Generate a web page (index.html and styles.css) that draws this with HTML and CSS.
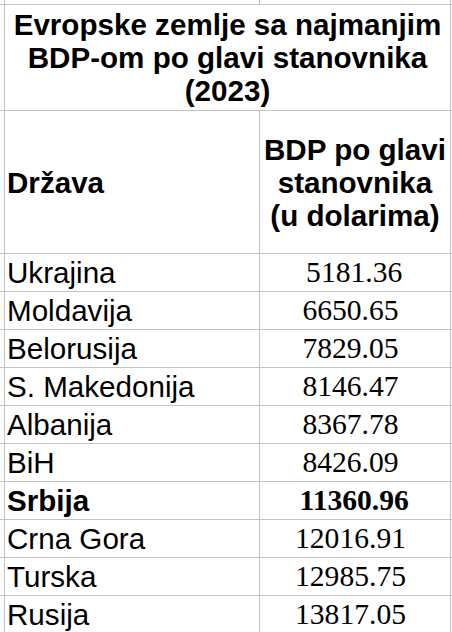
FILE: index.html
```html
<!DOCTYPE html>
<html lang="sr">
<head>
    <meta charset="UTF-8">
    <meta name="viewport" content="width=device-width, initial-scale=1.0">
    <title>Evropske zemlje sa najmanjim BDP-om</title>
    <link rel="stylesheet" href="styles.css">
</head>
<body>

    <div class="sheet">
        <!-- red iznad tabele -->
        <div class="cell"></div>
        <div class="cell"></div>
        <div class="cell"></div>
        <div class="cell"></div>

        <div class="cell"></div>
        <div class="cell title">Evropske zemlje sa najmanjim<br>BDP-om po glavi stanovnika<br>(2023)</div>
        <div class="cell"></div>

        <div class="cell"></div>
        <div class="cell head">Država</div>
        <div class="cell head center">BDP po glavi<br>stanovnika<br>(u dolarima)</div>
        <div class="cell"></div>

        <div class="cell"></div><div class="cell name">Ukrajina</div><div class="cell num"> 5181.36</div><div class="cell"></div>
        <div class="cell"></div><div class="cell name">Moldavija</div><div class="cell num">6650.65</div><div class="cell"></div>
        <div class="cell"></div><div class="cell name">Belorusija</div><div class="cell num">7829.05</div><div class="cell"></div>
        <div class="cell"></div><div class="cell name">S. Makedonija</div><div class="cell num">8146.47</div><div class="cell"></div>
        <div class="cell"></div><div class="cell name">Albanija</div><div class="cell num">8367.78</div><div class="cell"></div>
        <div class="cell"></div><div class="cell name">BiH</div><div class="cell num">8426.09</div><div class="cell"></div>
        <div class="cell"></div><div class="cell name bold">Srbija</div><div class="cell num bold"> 11360.96</div><div class="cell"></div>
        <div class="cell"></div><div class="cell name">Crna Gora</div><div class="cell num">12016.91</div><div class="cell"></div>
        <div class="cell"></div><div class="cell name">Turska</div><div class="cell num">12985.75</div><div class="cell"></div>
        <div class="cell"></div><div class="cell name">Rusija</div><div class="cell num">13817.05</div><div class="cell"></div>
    </div>

</body>
</html>
```

FILE: styles.css
```css
body {
    margin: 0;
    background-color: #fff;
    font-family: "Liberation Sans", Arial, sans-serif;
    color: #000;
    overflow: hidden;
}

.sheet {
    display: grid;
    grid-template-columns: 4px 254px 190px 1px;
    grid-template-rows: 4px 105px 142px;
    grid-auto-rows: 37px;
    gap: 1px;
    background-color: #c4c4c4;
    width: 452px;
}

.cell {
    background-color: #fff;
    font-size: 29.6px;
    line-height: 33px;
    display: flex;
    align-items: center;
    padding-left: 2px;
    white-space: pre;
}

.title {
    grid-column: span 2;
    justify-content: center;
    text-align: center;
    font-weight: bold;
    padding-left: 0;
}

.head {
    font-weight: bold;
}

.center {
    justify-content: center;
    text-align: center;
    padding-left: 0;
}

.num {
    font-family: "Liberation Serif", "Times New Roman", serif;
    justify-content: center;
    padding-left: 0;
    padding-right: 9px;
}

.bold {
    font-weight: bold;
}
```
